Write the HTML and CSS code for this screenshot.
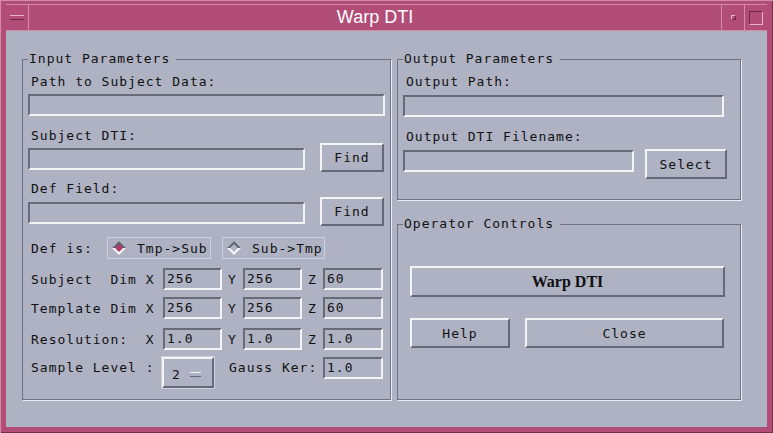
FILE: index.html
```html
<!DOCTYPE html>
<html lang="en">
<head>
    <meta charset="UTF-8">
    <title>Warp DTI</title>
    <link rel="stylesheet" href="styles.css">
</head>
<body>
    <div class="window">
        <div class="titlebar">
            <div class="tb-btn menu-btn"><span class="menu-bar"></span></div>
            <div class="title">Warp DTI</div>
            <div class="tb-btn min-btn"><span class="min-dot"></span></div>
            <div class="tb-btn max-btn"><span class="max-box"></span></div>
        </div>

        <div class="client">
            <!-- left column -->
            <fieldset class="group input-group">
                <legend>Input Parameters</legend>
                <div class="label first">Path to Subject Data:</div>
                <div class="field path-field"></div>

                <div class="label second">Subject DTI:</div>
                <div class="file-row">
                    <div class="field file-field"></div>
                    <div class="button find-btn">Find</div>
                </div>

                <div class="label third">Def Field:</div>
                <div class="file-row def-row">
                    <div class="field file-field"></div>
                    <div class="button find-btn">Find</div>
                </div>

                <div class="radio-row">
                    <span class="row-label def-label">Def is:</span>
                    <div class="radio selected">
                        <svg width="14" height="14" viewBox="0 0 14 14">
                            <polygon points="7,0 14,7 7,14 0,7" fill="#f6f6f8"/>
                            <polygon points="0,7 7,0 14,7" fill="#5f6170"/>
                            <polygon points="7,3 11,7 7,11 3,7" fill="#b2386a"/>
                        </svg>
                        <span>Tmp-&gt;Sub</span>
                    </div>
                    <div class="radio">
                        <svg width="14" height="14" viewBox="0 0 14 14">
                            <polygon points="7,0 14,7 7,14 0,7" fill="#f6f6f8"/>
                            <polygon points="0,7 7,0 14,7" fill="#5f6170"/>
                            <polygon points="7,3 11,7 7,11 3,7" fill="#aeb2c3"/>
                        </svg>
                        <span>Sub-&gt;Tmp</span>
                    </div>
                </div>

                <div class="dim-row subject-row">
                    <span class="row-label dim-label">Subject  Dim X</span>
                    <div class="field num-field">256</div>
                    <span class="axis">Y</span>
                    <div class="field num-field">256</div>
                    <span class="axis">Z</span>
                    <div class="field num-field last">60</div>
                </div>
                <div class="dim-row template-row">
                    <span class="row-label dim-label">Template Dim X</span>
                    <div class="field num-field">256</div>
                    <span class="axis">Y</span>
                    <div class="field num-field">256</div>
                    <span class="axis">Z</span>
                    <div class="field num-field last">60</div>
                </div>
                <div class="dim-row res-row">
                    <span class="row-label dim-label">Resolution:  X</span>
                    <div class="field num-field">1.0</div>
                    <span class="axis">Y</span>
                    <div class="field num-field">1.0</div>
                    <span class="axis">Z</span>
                    <div class="field num-field last">1.0</div>
                </div>

                <div class="sample-row">
                    <span class="row-label sample-label">Sample Level :</span>
                    <div class="option-menu">
                        <span>2</span>
                        <span class="option-bar"></span>
                    </div>
                    <span class="gauss-label">Gauss Ker:</span>
                    <div class="field num-field last">1.0</div>
                </div>
            </fieldset>

            <!-- right column -->
            <div class="right-col">
                <fieldset class="group output-group">
                    <legend>Output Parameters</legend>
                    <div class="label first">Output Path:</div>
                    <div class="field out-path-field"></div>

                    <div class="label second">Output DTI Filename:</div>
                    <div class="select-row">
                        <div class="field out-file-field"></div>
                        <div class="button select-btn">Select</div>
                    </div>
                </fieldset>

                <fieldset class="group ops-group">
                    <legend>Operator Controls</legend>
                    <div class="button warp-btn">Warp DTI</div>
                    <div class="ops-row">
                        <div class="button help-btn">Help</div>
                        <div class="button close-btn">Close</div>
                    </div>
                </fieldset>
            </div>
        </div>
    </div>
</body>
</html>
```

FILE: styles.css
```css
body {
    margin: 0;
    padding: 0;
    background-color: #b24d78;
    font-family: "DejaVu Sans Mono", "Liberation Mono", monospace;
    font-size: 13px;
    letter-spacing: 1px;
    color: #111;
}
.window {
    width: 773px;
    height: 433px;
    box-sizing: border-box;
    padding: 4px 6px 6px 6px;
    background-color: #b24d78;
    box-shadow: inset 1px 1px 0 #d58aa9, inset -1px -1px 0 #7a2c4d;
    display: flex;
    flex-direction: column;
}

/* title bar */
.titlebar {
    height: 27px;
    display: flex;
    box-sizing: border-box;
    border-top: 1px solid #d48ba9;
    border-bottom: 1px solid #d48ba9;
}
.tb-btn {
    width: 22px;
    display: flex;
    align-items: center;
    justify-content: center;
}
.menu-btn {
    border-right: 1px solid #d48ba9;
}
.min-btn, .max-btn {
    border-left: 1px solid #d48ba9;
}
.menu-bar {
    width: 14px;
    height: 3px;
    border-top: 1px solid #e6b2c7;
    border-bottom: 1px solid #6e2646;
    background: #b24d78;
}
.min-dot {
    width: 3px;
    height: 3px;
    border-top: 1px solid #e6b2c7;
    border-left: 1px solid #e6b2c7;
    border-bottom: 1px solid #6e2646;
    border-right: 1px solid #6e2646;
}
.max-box {
    width: 12px;
    height: 12px;
    border-top: 1px solid #6e2646;
    border-left: 1px solid #6e2646;
    border-bottom: 1px solid #e6b2c7;
    border-right: 1px solid #e6b2c7;
}
.title {
    flex: 1;
    text-align: center;
    color: #fff;
    font-family: "Liberation Sans", Arial, sans-serif;
    font-size: 18px;
    letter-spacing: 0;
    line-height: 25px;
}

/* client area */
.client {
    flex: 1;
    background-color: #aeb2c3;
    padding: 20px 0 0 16px;
    display: grid;
    grid-template-columns: 369px 344px;
    column-gap: 6px;
    align-items: start;
}
.group {
    margin: 0;
    min-width: 0;
    box-sizing: border-box;
    border: 1px solid #6f7283;
    box-shadow: 1px 1px 0 #eceef3;
    padding: 0 5px;
}
.group legend {
    padding: 0 6px 0 1px;
    line-height: 16px;
}
.input-group {
    height: 349px;
}
.right-col {
    display: flex;
    flex-direction: column;
    gap: 16px;
}
.output-group {
    height: 149px;
}
.ops-group {
    height: 184px;
}

.label {
    line-height: 14px;
    padding-left: 3px;
}
.label.first {
    margin-top: 8px;
}
.label.second {
    margin-top: 13px;
}
.label.third {
    margin-top: 10px;
}

/* sunken text fields */
.field {
    box-sizing: border-box;
    height: 22px;
    border-top: 2px solid #686a78;
    border-left: 2px solid #686a78;
    border-bottom: 2px solid #f4f4f7;
    border-right: 2px solid #f4f4f7;
    padding-left: 2px;
    line-height: 18px;
}
.path-field {
    width: 357px;
    margin-top: 5px;
}
.file-row {
    display: flex;
    align-items: flex-end;
}
.def-row {
    margin-top: 1px;
}
.file-field {
    width: 277px;
    margin-bottom: 2px;
}

/* raised buttons */
.button {
    box-sizing: border-box;
    border-top: 2px solid #f4f4f7;
    border-left: 2px solid #f4f4f7;
    border-bottom: 2px solid #666877;
    border-right: 2px solid #666877;
    display: flex;
    align-items: center;
    justify-content: center;
}
.find-btn {
    width: 64px;
    height: 29px;
    margin-left: 15px;
}

/* radio row */
.radio-row {
    display: flex;
    align-items: center;
    margin-top: 11px;
    height: 22px;
}
.row-label {
    white-space: pre;
    padding-left: 3px;
    box-sizing: border-box;
}
.def-label {
    width: 79px;
}
.radio {
    box-sizing: border-box;
    height: 22px;
    width: 104px;
    border: 1px solid #cfd2dc;
    display: flex;
    align-items: center;
    padding-left: 4px;
    gap: 11px;
}
.radio + .radio {
    margin-left: 11px;
    width: 103px;
}
.radio svg {
    display: block;
}

/* dimension rows */
.dim-row {
    display: flex;
    align-items: center;
}
.subject-row {
    margin-top: 9px;
}
.template-row {
    margin-top: 7px;
}
.res-row {
    margin-top: 9px;
}
.dim-label {
    width: 135px;
}
.num-field {
    width: 59px;
}
.num-field.last {
    width: 60px;
}
.axis {
    width: 21px;
    text-align: center;
}

/* sample level row */
.sample-row {
    display: flex;
    align-items: flex-start;
    margin-top: 7px;
}
.sample-label {
    width: 134px;
    line-height: 22px;
}
.option-menu {
    box-sizing: border-box;
    width: 52px;
    height: 31px;
    border-top: 2px solid #f4f4f7;
    border-left: 2px solid #f4f4f7;
    border-bottom: 2px solid #666877;
    border-right: 2px solid #666877;
    box-shadow: 0 0 0 1px #cfd2dc;
    display: flex;
    align-items: center;
    padding: 3px 0 0 8px;
}
.option-bar {
    width: 11px;
    height: 3px;
    margin-left: 9px;
    border-top: 1px solid #f4f4f7;
    border-bottom: 1px solid #666877;
    background: #aeb2c3;
}
.gauss-label {
    width: 109px;
    padding-left: 15px;
    box-sizing: border-box;
    line-height: 22px;
}

/* output group */
.out-path-field {
    width: 321px;
    margin-top: 6px;
}
.select-row {
    display: flex;
    align-items: flex-start;
    margin-top: 5px;
}
.out-file-field {
    width: 231px;
    margin-top: 1px;
}
.select-btn {
    width: 82px;
    height: 30px;
    margin-left: 11px;
}

/* operator controls */
.warp-btn {
    margin: 34px 0 0 7px;
    width: 315px;
    height: 31px;
    font-family: "Liberation Serif", "Times New Roman", serif;
    font-weight: bold;
    font-size: 16px;
    letter-spacing: 0;
}
.ops-row {
    display: flex;
    margin: 21px 0 0 7px;
}
.help-btn {
    width: 100px;
    height: 30px;
}
.close-btn {
    width: 199px;
    height: 30px;
    margin-left: 15px;
}
```
